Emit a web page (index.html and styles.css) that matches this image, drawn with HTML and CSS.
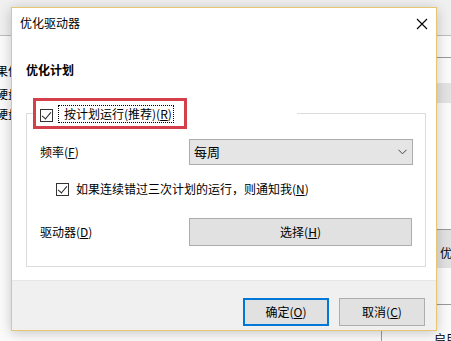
FILE: index.html
```html
<!DOCTYPE html>
<html>
<head>
    <meta charset="UTF-8" />
    <title>优化驱动器</title>
    <link rel="stylesheet" href="styles.css">
</head>
<body>
    <!-- 后面的窗口 -->
    <div id="desk">
        <div class="bar"></div>
        <p class="txt t1">果优</p>
        <p class="txt t2">硬盘</p>
        <p class="txt t3">硬盘</p>
        <div class="line l1"></div>
        <div class="band"></div>
        <div class="line l2"></div>
        <div class="opt">优</div>
        <div class="line l3"></div>
        <div class="vline"></div>
        <p class="txt t4">启用</p>
    </div>

    <!-- 对话框 -->
    <div id="dialog">
        <div class="title">
            <span>优化驱动器</span>
            <svg class="close" width="12" height="12" viewBox="0 0 12 12">
                <path d="M1 1L11 11M11 1L1 11" stroke="#000" stroke-width="1.1" fill="none"/>
            </svg>
        </div>
        <div class="content">
            <h2>优化计划</h2>
            <fieldset class="group">
                <legend>
                    <span class="mark">
                        <span class="check on"></span>
                        <span class="focus">按计划运行(推荐)(<u>R</u>)</span>
                    </span>
                </legend>
                <div class="row first">
                    <label class="name">频率(<u>F</u>)</label>
                    <div class="select">
                        <span>每周</span>
                        <svg width="9" height="6" viewBox="0 0 9 6">
                            <path d="M0.5 0.8L4.5 4.8L8.5 0.8" stroke="#444" stroke-width="1" fill="none"/>
                        </svg>
                    </div>
                </div>
                <div class="row notify">
                    <span class="check on"></span>
                    <span>如果连续错过三次计划的运行，则通知我(<u>N</u>)</span>
                </div>
                <div class="row drive">
                    <label class="name">驱动器(<u>D</u>)</label>
                    <div class="btn wide">选择(<u>H</u>)</div>
                </div>
            </fieldset>
        </div>
        <div class="foot">
            <div class="btn ok">确定(<u>O</u>)</div>
            <div class="btn">取消(<u>C</u>)</div>
        </div>
    </div>
</body>
</html>
```

FILE: styles.css
```css
*{ margin:0; padding:0; box-sizing:border-box; }
body{
    position: relative;
    width: 451px;
    height: 341px;
    overflow: hidden;
    background: #fbfbfb;
    font: 12px/16px "Noto Sans CJK SC","Microsoft yahei",sans-serif;
    color: #000;
}
u{ text-decoration: underline; text-underline-offset: 1px; }

/* 后面的窗口 */
#desk{
    position: absolute;
    left: 0;
    top: 0;
    width: 451px;
    height: 341px;
    overflow: hidden;
}
#desk .bar{
    height: 36px;
    background: #f0f0f0;
    border-bottom: 1px solid #bdbdbd;
}
#desk .txt{
    position: absolute;
    white-space: nowrap;
}
#desk .t1{ left: -4px; top: 63px; }
#desk .t2{ left: -4px; top: 86px; }
#desk .t3{ left: -4px; top: 106px; }
#desk .t4{ left: 434px; top: 331px; }
#desk .line{
    position: absolute;
    left: 380px;
    right: 0;
    height: 1px;
    background: #9a9a9a;
}
#desk .l1{ top: 57px; }
#desk .l2{ top: 229px; }
#desk .l3{ top: 304px; }
#desk .band{
    position: absolute;
    left: 380px;
    right: 0;
    top: 83px;
    height: 20px;
    background: #e3e3e3;
}
#desk .opt{
    position: absolute;
    left: 437px;
    top: 230px;
    width: 14px;
    height: 38px;
    padding: 15px 0 0 3px;
    background: #e1e1e1;
    white-space: nowrap;
}
#desk .vline{
    position: absolute;
    left: 381px;
    top: 330px;
    width: 1px;
    height: 11px;
    background: #9a9a9a;
}

/* 对话框 */
#dialog{
    position: absolute;
    left: 11px;
    top: 7px;
    width: 426px;
    height: 324px;
    display: flex;
    flex-direction: column;
    background: #fff;
    border: 1px solid #e4c675;
    box-shadow: 0 2px 12px rgba(0,0,0,.22);
}
#dialog .title{
    display: flex;
    align-items: center;
    justify-content: space-between;
    height: 30px;
    padding: 0 8px;
}
#dialog .close{ margin-top: 1px; }
#dialog .content{
    flex: 1;
    padding: 24px 10px 0 14px;
}
#dialog h2{
    font-size: 12px;
    line-height: 16px;
    font-weight: bold;
}

/* 分组框 */
.group{
    margin-top: 20px;
    border: 1px solid #dcdcdc;
    padding: 0 11px 20px 13px;
}
.group legend{
    margin-left: -7px;
    padding-right: 110px;
}
.group .mark{
    display: flex;
    align-items: center;
    width: 154px;
    height: 31px;
    padding: 0 11px 0 4px;
    border: 3px solid #d4404a;
}
.check{
    position: relative;
    flex: none;
    width: 13px;
    height: 13px;
    border: 1px solid #333;
    background: #fff;
}
.check.on::after{
    content: "";
    position: absolute;
    left: 3px;
    top: 0;
    width: 4px;
    height: 8px;
    border: solid #222;
    border-width: 0 1px 1px 0;
    transform: rotate(40deg);
}
.group .mark .check{ margin-top: 3px; }
.group .focus{
    margin-left: 5px;
    height: 18px;
    line-height: 17px;
    padding: 0 2px 0 6px;
    outline: 1px dotted #000;
    outline-offset: -1px;
    white-space: nowrap;
}
.row{
    display: flex;
    align-items: center;
}
.row .name{
    width: 149px;
    flex: none;
}
.row.first{ margin-top: 10px; height: 26px; }
.row.notify{
    margin-top: 14px;
    height: 20px;
    padding-left: 16px;
    gap: 7px;
    white-space: nowrap;
}
.row.drive{ margin-top: 19px; height: 28px; }
.select{
    display: flex;
    align-items: center;
    justify-content: space-between;
    width: 224px;
    height: 26px;
    padding: 0 5px 0 4px;
    background: #e5e5e5;
    border: 1px solid #acacac;
}
.select span{ font-size: 13px; }
.btn{
    display: flex;
    align-items: center;
    justify-content: center;
    width: 86px;
    height: 28px;
    background: #e1e1e1;
    border: 1px solid #adadad;
    white-space: nowrap;
}
.btn.wide{ width: 223px; }
.btn.ok{ border: 2px solid #0078d7; }

/* 底部按钮 */
#dialog .foot{
    display: flex;
    justify-content: flex-end;
    gap: 10px;
    height: 50px;
    padding: 17px 11px 0 0;
    background: #f0f0f0;
    border-top: 1px solid #e6e6e6;
}
```
